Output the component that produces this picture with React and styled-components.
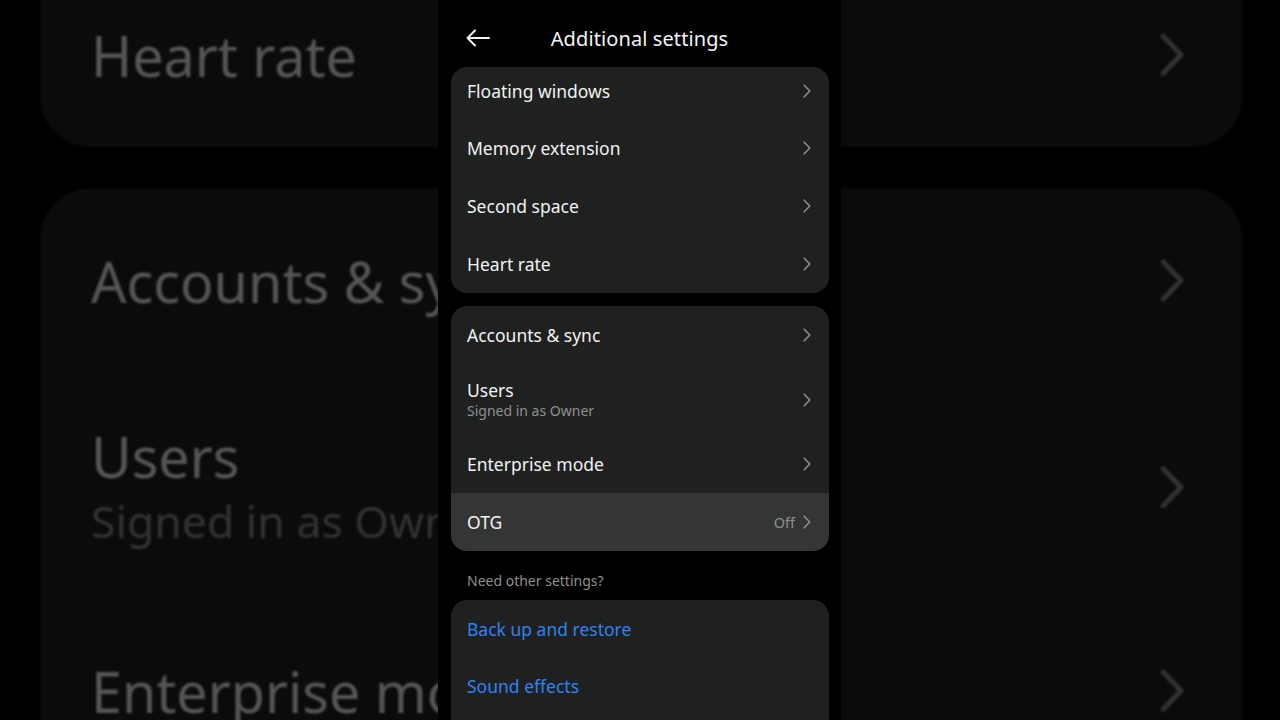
import React from 'react';
import styled, { createGlobalStyle } from 'styled-components';

const GlobalStyle = createGlobalStyle`
    html, body {
        margin: 0;
        padding: 0;
        background: #000;
        overflow: hidden;
    }
    * {
        box-sizing: border-box;
    }
`

const groups = [
    [
        { title: 'Floating windows', clip: true },
        { title: 'Memory extension' },
        { title: 'Second space' },
        { title: 'Heart rate' },
    ],
    [
        { title: 'Accounts & sync' },
        { title: 'Users', sub: 'Signed in as Owner' },
        { title: 'Enterprise mode' },
        { title: 'OTG', value: 'Off', active: true },
    ],
]

const links = ['Back up and restore', 'Sound effects']

const BackArrow = () => (
    <svg width="24" height="18" viewBox="0 0 24 18" fill="none">
        <path d="M23 9H2M9 1.5L1.5 9L9 16.5" stroke="#f2f2f2" strokeWidth="2" strokeLinecap="round" strokeLinejoin="round" />
    </svg>
)

const Chevron = () => (
    <svg width="8" height="14" viewBox="0 0 8 14" fill="none">
        <path d="M1.2 1.2L6.8 7L1.2 12.8" stroke="#8d8e8e" strokeWidth="1.6" strokeLinecap="round" strokeLinejoin="round" />
    </svg>
)

const Screen = () => (
    <StScreen>
        <StHeader>
            <StBack><BackArrow /></StBack>
            <h1>Additional settings</h1>
        </StHeader>
        <StContent>
            {groups.map((group, i) => (
                <StCard key={i}>
                    {group.map(item => (
                        <StRow key={item.title} $clip={item.clip} $tall={!!item.sub} $active={item.active}>
                            <StText>
                                <span>{item.title}</span>
                                {item.sub && <small>{item.sub}</small>}
                            </StText>
                            <StTail>
                                {item.value && <span>{item.value}</span>}
                                <Chevron />
                            </StTail>
                        </StRow>
                    ))}
                </StCard>
            ))}
            <StLabel>Need other settings?</StLabel>
            <StCard $open>
                {links.map(link => (
                    <StRow key={link} $short>
                        <StLink>{link}</StLink>
                    </StRow>
                ))}
            </StCard>
        </StContent>
    </StScreen>
)

const App = () => {
    return (
        <>
            <GlobalStyle />
            <StStage>
                <StBackdrop aria-hidden="true">
                    <Screen />
                </StBackdrop>
                <StPhone>
                    <Screen />
                </StPhone>
            </StStage>
        </>
    );
};

const StStage = styled.div`
    width: 100vw;
    height: 720px;
    display: grid;
    grid-template-columns: 438px 403px 1fr;
    align-items: start;
    overflow: hidden;
    background: #000;
    font-family: "Noto Sans", "Open Sans", sans-serif;
    & > * {
        grid-area: 1 / 2;
    }
`

const StBackdrop = styled.div`
    transform: scale(3.18);
    transform-origin: 50% 50%;
    filter: brightness(0.35) blur(0.4px);
`

const StPhone = styled.div`
    position: relative;
`

const StScreen = styled.div`
    width: 403px;
    height: 720px;
    background: #000;
    overflow: hidden;
    display: flex;
    flex-direction: column;
`

const StHeader = styled.div`
    height: 67px;
    flex-shrink: 0;
    display: flex;
    align-items: center;
    justify-content: center;
    position: relative;
    padding-top: 10px;
    h1 {
        margin: 0;
        font-size: 20px;
        font-weight: 400;
        color: #f4f4f4;
        letter-spacing: 0.1px;
    }
`

const StBack = styled.div`
    position: absolute;
    left: 28px;
    top: 29px;
    display: flex;
`

const StContent = styled.div`
    padding: 0 12px 0 13px;
    display: flex;
    flex-direction: column;
    gap: 13px;
`

const StCard = styled.div`
    background: #1f2020;
    border-radius: 16px;
    overflow: hidden;
    display: flex;
    flex-direction: column;
    flex-shrink: 0;
    padding-bottom: ${props => props.$open ? '40px' : '0'};
`

const rowHeight = props => {
    if (props.$clip) return '52px'
    if (props.$tall) return '71px'
    if (props.$short) return '57px'
    return '58px'
}

const StRow = styled.div`
    height: ${rowHeight};
    flex-shrink: 0;
    padding: 0 18px ${props => props.$clip ? '5px' : '0'} 16px;
    display: flex;
    align-items: center;
    justify-content: space-between;
    background: ${props => props.$active ? '#343535' : 'transparent'};
`

const StText = styled.div`
    display: flex;
    flex-direction: column;
    gap: 1px;
    span {
        font-size: 17.5px;
        color: #f2f2f2;
        line-height: 22px;
    }
    small {
        font-size: 14px;
        color: #8f9090;
        line-height: 18px;
    }
`

const StTail = styled.div`
    display: flex;
    align-items: center;
    gap: 8px;
    span {
        font-size: 14.5px;
        color: #8f9090;
    }
    svg {
        display: block;
    }
`

const StLabel = styled.div`
    margin: -13px 0;
    height: 49px;
    flex-shrink: 0;
    padding: 21px 16px 0;
    font-size: 14px;
    line-height: 18px;
    color: #8f9090;
`

const StLink = styled.span`
    font-size: 17.5px;
    color: #2f82f2;
`

export default App;
